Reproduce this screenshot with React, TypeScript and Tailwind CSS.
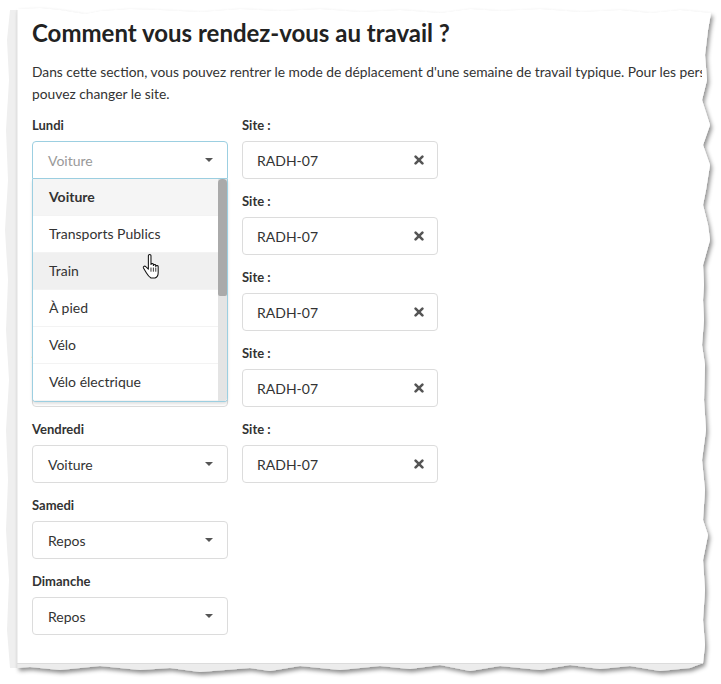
const DAYS = [
  { day: "Lundi", mode: "Voiture", site: "RADH-07" },
  { day: "Mardi", mode: "Voiture", site: "RADH-07" },
  { day: "Mercredi", mode: "Voiture", site: "RADH-07" },
  { day: "Jeudi", mode: "Voiture", site: "RADH-07" },
  { day: "Vendredi", mode: "Voiture", site: "RADH-07" },
  { day: "Samedi", mode: "Repos", site: null },
  { day: "Dimanche", mode: "Repos", site: null },
];

const OPTIONS = ["Voiture", "Transports Publics", "Train", "À pied", "Vélo", "Vélo électrique"];

const TOP = "M17 9 L40 8 L60 10 L85 14 L100 11 L130 9 L160 10 L200 12 L240 9 L280 11 L320 9 L360 12 L400 10 L440 13 L470 9 L500 11 L540 9 L580 12 L620 10 L650 13 L680 10 L711 13";
const RIGHT =
  "L708 30 L705 55 L707 80 L702 100 L710 125 L703 145 L710 165 L706 190 L703 205 L708 225 L710 240 L703 265 L704 285 L703 300 L704 320 L702 345 L705 365 L704 400 L706 430 L702 460 L705 490 L703 520 L708 535 L703 560 L705 590 L703 620 L705 645 L703 663";

function TornPaper() {
  return (
    <svg className="pointer-events-none absolute inset-0" width="721" height="684" viewBox="0 0 721 684">
      <defs>
        <filter id="sh" x="-5%" y="-5%" width="110%" height="110%">
          <feDropShadow dx="2" dy="3" stdDeviation="2" floodColor="#000" floodOpacity="0.45" />
        </filter>
      </defs>
      <path
        d="M10 10 L7 40 L9 80 L6 130 L8 180 L5 230 L8 280 L6 330 L9 380 L6 430 L8 480 L6 530 L9 580 L7 630 L10 668 L17 668 L17 10 Z"
        fill="#efefef"
      />
      <path
        d={`${TOP} ${RIGHT} L690 668 L660 671 L630 666 L600 669 L570 665 L540 670 L500 666 L470 671 L440 665 L410 669 L380 666 L340 670 L300 666 L270 671 L250 668 L200 672 L170 668 L140 670 L100 666 L60 670 L30 667 L17 668 Z`}
        fill="#ececec"
        filter="url(#sh)"
      />
      <path d={`${TOP} ${RIGHT} L17 663 Z`} fill="#ffffff" />
      <line x1="17" y1="10" x2="17" y2="668" stroke="#e2e2e2" strokeWidth="1" />
      <line x1="17" y1="663.5" x2="703" y2="663.5" stroke="#dcdcdc" strokeWidth="1" />
    </svg>
  );
}

function Caret() {
  return <span className="h-0 w-0 border-x-[4px] border-t-[4px] border-x-transparent border-t-[#555]" />;
}

// heavy "times" glyph like the old icon font
function ClearIcon() {
  return (
    <svg width="10" height="10" viewBox="0 0 10 10" className="shrink-0">
      <path d="M1.6 1.6 8.4 8.4M8.4 1.6 1.6 8.4" stroke="#555" strokeWidth="2.6" strokeLinecap="round" />
    </svg>
  );
}

function HandCursor() {
  return (
    <svg className="pointer-events-none absolute left-[142px] top-[254px] z-30" width="19" height="25" viewBox="0 0 18 24">
      <path
        d="M6 1.5c0-1.3 2.5-1.3 2.5 0V10c0-1.2 2.3-1.2 2.3 0v1c0-1.2 2.3-1.2 2.3 0v1c0-1.2 2.3-1.2 2.3 0V18c0 2.5-1.5 4.5-3 5H8.5c-1.5-.8-3-2.5-4.5-5L1.3 13.5c-.7-1.3 1-2.5 2.2-1.3L6 14.5Z"
        fill="#fff"
        stroke="#111"
        strokeWidth="1"
        strokeLinejoin="round"
      />
      <path d="M8.5 13v4M10.8 13v4M13.1 13v4" stroke="#111" strokeWidth="0.8" />
    </svg>
  );
}

function ModeSelect({ value, open }: { value: string; open?: boolean }) {
  if (open) {
    return (
      <div className="relative">
        <div className="flex h-[38px] items-center justify-between rounded-t-[4px] border border-[#9ccfe1] pl-[15px] pr-[14px] text-[14px] text-[#999]">
          <span>{value}</span>
          <Caret />
        </div>
        <div className="absolute left-0 top-full z-20 w-full overflow-hidden rounded-b-[4px] border border-t-0 border-[#9ccfe1] bg-white shadow-[0_2px_3px_rgba(0,0,0,0.12)]">
          {OPTIONS.map((o, i) => (
            <div
              key={o}
              className={`flex h-[37px] items-center border-b border-[#f3f3f3] pb-[1px] pl-[16px] text-[14px] text-[#333] last:border-b-0 ${
                i === 0 ? "bg-[#f5f5f5] font-bold" : i === 2 ? "bg-[#f0f0f0]" : "bg-white"
              }`}
            >
              {o}
            </div>
          ))}
          <div className="absolute bottom-0 right-0 top-0 w-[9px] bg-[#e4e4e4]">
            <div className="h-[117px] w-full rounded-t-[4px] rounded-b-[2px] bg-[#aaaaaa]" />
          </div>
        </div>
      </div>
    );
  }
  return (
    <div className="flex h-[38px] items-center justify-between rounded-[4px] border border-[#dcdcdc] pl-[15px] pr-[14px] text-[14px] text-[#333]">
      <span>{value}</span>
      <Caret />
    </div>
  );
}

function SiteInput({ value }: { value: string }) {
  return (
    <div className="flex h-[38px] items-center justify-between rounded-[4px] border border-[#dcdcdc] pl-[14px] pr-[13px] text-[14px] text-[#333]">
      <span>{value}</span>
      <ClearIcon />
    </div>
  );
}

export default function App() {
  return (
    <div className="relative h-[684px] w-[721px] overflow-hidden bg-white font-['Lato',sans-serif] text-[#333]">
      <TornPaper />
      <HandCursor />
      <div className="relative pl-[32px] pt-[18px]">
        <h1 className="text-[24px] font-bold leading-[30px] text-[#222]">Comment vous rendez-vous au travail ?</h1>
        <div className="mt-[13px] w-[670px] overflow-hidden whitespace-nowrap text-[13.8px] leading-[22px]">
          <p>
            Dans cette section, vous pouvez rentrer le mode de déplacement d'une semaine de travail typique. Pour les personnes
            travaillant sur plusieurs sites, vous
          </p>
          <p>pouvez changer le site.</p>
        </div>
        <div className="mt-[10px] grid grid-cols-[196px_196px] gap-x-[14px] gap-y-[12px]">
          {DAYS.map((d, i) => (
            <div key={d.day} className="contents">
              <div className="flex flex-col gap-[6px]">
                <label className="text-[13px] font-bold leading-[20px] text-[#333]">{d.day}</label>
                <ModeSelect value={d.mode} open={i === 0} />
              </div>
              {d.site ? (
                <div className="flex flex-col gap-[6px]">
                  <label className="text-[13px] font-bold leading-[20px] text-[#333]">Site :</label>
                  <SiteInput value={d.site} />
                </div>
              ) : (
                <div />
              )}
            </div>
          ))}
        </div>
      </div>
    </div>
  );
}
